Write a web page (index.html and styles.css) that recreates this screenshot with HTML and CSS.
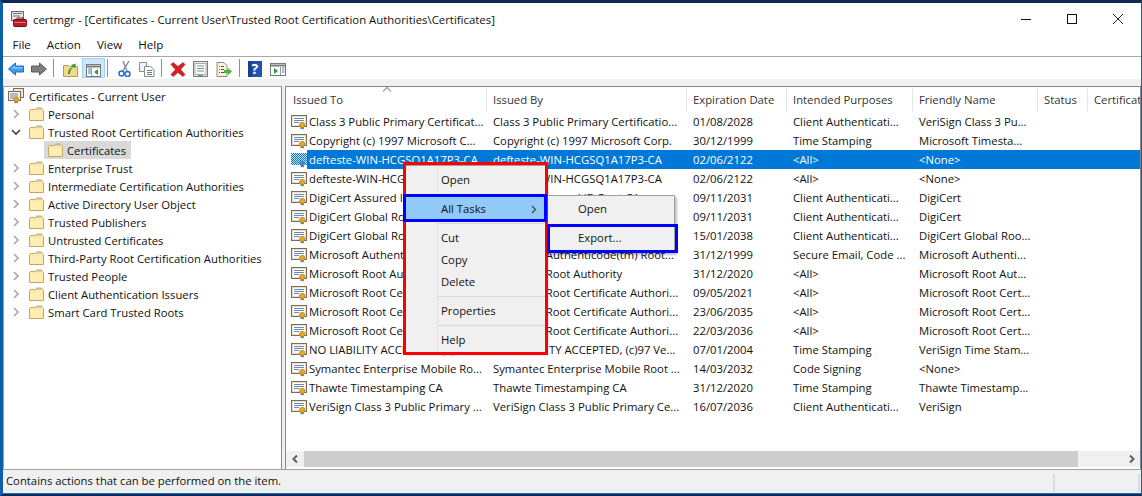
FILE: index.html
```html
<!DOCTYPE html>
<html lang="en">
<head>
    <meta charset="UTF-8">
    <title>certmgr</title>
    <link rel="stylesheet" href="styles.css">
</head>
<body>
    <svg class="defs" width="0" height="0">
        <defs>
            <symbol id="cert" viewBox="0 0 16 16">
                <rect x="0.5" y="1.5" width="15" height="11" fill="#e9e0cd" stroke="#7d6a52"/>
                <rect x="2" y="3" width="12" height="8" fill="#fff"/>
                <path d="M3 4.500h10M3 6.500h10M3 8.500h5" stroke="#6a8bb8"/>
                <path d="M10 12l-.5 3.500 1.700-1 1.700 1-.4-3.500z" fill="#2468c8"/>
                <circle cx="11.200" cy="11" r="2.700" fill="#e6a91f" stroke="#a8741a" stroke-width="0.600"/>
            </symbol>
            <symbol id="cert-root" viewBox="0 0 16 16">
                <rect x="5.500" y="0.500" width="10" height="9" fill="#efe7d6" stroke="#7d6a52"/>
                <rect x="0.500" y="3.500" width="12" height="9" fill="#f4efe3" stroke="#7d6a52"/>
                <path d="M2 6h8M2 8h8M2 10h4" stroke="#6a8bb8"/>
                <path d="M7 12l-.5 3.500 1.700-1 1.700 1-.4-3.500z" fill="#2468c8"/>
                <circle cx="8.200" cy="11.500" r="2.500" fill="#e6a91f" stroke="#a8741a" stroke-width="0.600"/>
            </symbol>
            <symbol id="cert-sel" viewBox="0 0 16 16">
                <pattern id="dither" width="2" height="2" patternUnits="userSpaceOnUse">
                    <rect width="2" height="2" fill="#0078d7"/>
                    <rect width="1" height="1" fill="#cfe0ee"/>
                    <rect x="1" y="1" width="1" height="1" fill="#cfe0ee"/>
                </pattern>
                <rect x="0" y="1" width="16" height="12" fill="url(#dither)"/>
                <path d="M10 12l-.5 3.500 1.700-1 1.700 1-.4-3.500z" fill="#1c62b8"/>
                <circle cx="11.200" cy="11" r="2.600" fill="#4f87b5"/>
            </symbol>
            <symbol id="folder" viewBox="0 0 16 16">
                <path d="M1.500 14.500V4.500l1-1h5l1-1.500h5l1 1.500 1 1v10z" fill="#fde9a3" stroke="#c8a860"/>
                <path d="M8.500 3h5" stroke="#9fb7c4"/>
                <path d="M2.500 13.500V6h11.500v7.500z" fill="#feeeb6"/>
            </symbol>
            <symbol id="open" viewBox="0 0 10 10">
                <path d="M3 1l4 4-4 4" fill="none" stroke="#a6a6a6" stroke-width="1.600"/>
            </symbol>
            <symbol id="shut" viewBox="0 0 10 10">
                <path d="M1 3l4 4 4-4" fill="none" stroke="#404040" stroke-width="1.600"/>
            </symbol>
        </defs>
    </svg>

    <div class="window">
        <div class="titlebar">
            <svg class="app-icon" width="16" height="16" viewBox="0 0 16 16">
                <rect x="0.500" y="0.500" width="12" height="9" fill="#e6e6e6" stroke="#666"/>
                <path d="M2 2.500h9M2 5h7" stroke="#777"/>
                <rect x="2.500" y="8.500" width="13" height="7" rx="1" fill="#b51d24" stroke="#7d1116"/>
                <path d="M6 8.500V7h6v1.500" fill="none" stroke="#7d1116"/>
                <path d="M3 11.500h12" stroke="#e6777a"/>
            </svg>
            <span class="title">certmgr - [Certificates - Current User\Trusted Root Certification Authorities\Certificates]</span>
            <div class="win-buttons">
                <svg width="10" height="10" viewBox="0 0 10 10"><path d="M0 5.500h10" stroke="#111"/></svg>
                <svg width="10" height="10" viewBox="0 0 10 10"><rect x="0.500" y="0.500" width="9" height="9" fill="none" stroke="#111"/></svg>
                <svg width="10" height="10" viewBox="0 0 10 10"><path d="M0 0l10 10M10 0L0 10" stroke="#111" stroke-width="0.900"/></svg>
            </div>
        </div>

        <div class="menubar">
            <span>File</span><span>Action</span><span>View</span><span>Help</span>
        </div>

        <div class="toolbar">
            <svg class="tool t-back" width="16" height="14" viewBox="0 0 16 14"><path d="M0.500 7l7-6v3h8v6h-8v3z" fill="#3d9be8" stroke="#1a6fc0"/><path d="M3.500 7l3-2.500V6h8" fill="none" stroke="#a8d8fb"/></svg>
            <svg class="tool t-fwd" width="16" height="14" viewBox="0 0 16 14"><path d="M15.500 7l-7-6v3h-8v6h8v3z" fill="#7d7d7d" stroke="#5c5c5c"/></svg>
            <i class="tool-sep"></i>
            <svg class="tool t-up" width="15" height="15" viewBox="0 0 15 15"><path d="M0.500 14.500V3.500h5l1 1h8v10z" fill="#f4d98c" stroke="#b89a52"/><path d="M5 12c0-4 2-6 5-7L8 3l5-1.500-1 5-1.500-1.500C8 7 7 9 7 12z" fill="#3e9b2f"/></svg>
            <span class="tool-on">
                <svg width="15" height="13" viewBox="0 0 15 13"><rect x="0.500" y="0.500" width="14" height="12" fill="#fff" stroke="#7a7a7a"/><path d="M1 2.500h13" stroke="#7a7a7a" stroke-width="2"/><path d="M5.500 4v8" stroke="#999"/><path d="M2 5h3M2 7h3M2 9h3" stroke="#5a7ea8"/><path d="M12 5v6L8 8z" fill="#2a9b3c"/></svg>
            </span>
            <i class="tool-sep"></i>
            <svg class="tool t-cut" width="13" height="16" viewBox="0 0 13 16"><path d="M11 0L5 10M5 0l4 10" stroke="#7e8a95" stroke-width="1.400" fill="none"/><circle cx="3.500" cy="12.500" r="2.500" fill="none" stroke="#1f6fd0" stroke-width="1.500"/><circle cx="9.500" cy="13" r="2.500" fill="none" stroke="#1f6fd0" stroke-width="1.500"/></svg>
            <svg class="tool t-copy" width="16" height="15" viewBox="0 0 16 15"><path d="M0.500 0.500h7v9h-7z" fill="#f4f4f4" stroke="#8a8a8a"/><path d="M5.500 4.500h6l3.500 3v7H5.500z" fill="#fff" stroke="#8a8a8a"/><path d="M8 8.500h5M8 10.500h5M8 12.500h5" stroke="#5a7ea8"/></svg>
            <i class="tool-sep"></i>
            <svg class="tool t-del" width="16" height="15" viewBox="0 0 16 15"><path d="M1 2.500l2-2 5 4 5-4 2 2-4.500 5 4.500 5-2 2-5-4-5 4-2-2 4.500-5z" fill="#d81f26" stroke="#a81318" stroke-width="0.600"/></svg>
            <svg class="tool t-prop" width="15" height="16" viewBox="0 0 15 16"><rect x="0.500" y="0.500" width="14" height="15" fill="#eeeeee" stroke="#7a7a7a"/><rect x="2" y="2.500" width="11" height="11" fill="#fff" stroke="#aaa"/><path d="M4 5h7M4 7.500h7M4 10h7" stroke="#888"/><path d="M5 14.500h5" stroke="#2fa8e0"/></svg>
            <svg class="tool t-exp" width="16" height="15" viewBox="0 0 16 15"><path d="M1 0.500h7l3 3v11H1z" fill="#f8f3dc" stroke="#8f8a78"/><path d="M3 4.500h1M5 4.500h3M3 7.500h1M5 7.500h3M3 10.500h1M5 10.500h3" stroke="#555"/><path d="M8 8h4V6l4 3.500-4 3.500v-2H8z" fill="#4bb33e"/></svg>
            <i class="tool-sep"></i>
            <svg class="tool t-help" width="14" height="16" viewBox="0 0 14 16"><rect width="14" height="16" fill="#2552ad"/><rect width="4" height="16" fill="#1c3f8c"/><text x="3.500" y="13" class="help-mark">?</text></svg>
            <svg class="tool t-pane" width="16" height="13" viewBox="0 0 16 13"><rect x="0.500" y="0.500" width="15" height="12" fill="#fff" stroke="#7a7a7a"/><path d="M1 2.500h14" stroke="#7a7a7a" stroke-width="2"/><path d="M10.500 4v8" stroke="#999"/><path d="M12 5h2.500M12 7h2.500M12 9h2.500" stroke="#5a7ea8"/><path d="M4 5v6l4-3z" fill="#2a9b3c"/></svg>
        </div>

        <div class="panes">
            <div class="tree">
                <div class="tree-row root"><svg class="t-icon"><use href="#cert-root"/></svg>Certificates - Current User</div>
                <div class="tree-row"><svg class="arrow"><use href="#open"/></svg><svg class="t-icon"><use href="#folder"/></svg>Personal</div>
                <div class="tree-row"><svg class="arrow"><use href="#shut"/></svg><svg class="t-icon"><use href="#folder"/></svg>Trusted Root Certification Authorities</div>
                <div class="tree-row child"><span class="tree-sel"><svg class="t-icon"><use href="#folder"/></svg>Certificates</span></div>
                <div class="tree-row"><svg class="arrow"><use href="#open"/></svg><svg class="t-icon"><use href="#folder"/></svg>Enterprise Trust</div>
                <div class="tree-row"><svg class="arrow"><use href="#open"/></svg><svg class="t-icon"><use href="#folder"/></svg>Intermediate Certification Authorities</div>
                <div class="tree-row"><svg class="arrow"><use href="#open"/></svg><svg class="t-icon"><use href="#folder"/></svg>Active Directory User Object</div>
                <div class="tree-row"><svg class="arrow"><use href="#open"/></svg><svg class="t-icon"><use href="#folder"/></svg>Trusted Publishers</div>
                <div class="tree-row"><svg class="arrow"><use href="#open"/></svg><svg class="t-icon"><use href="#folder"/></svg>Untrusted Certificates</div>
                <div class="tree-row"><svg class="arrow"><use href="#open"/></svg><svg class="t-icon"><use href="#folder"/></svg>Third-Party Root Certification Authorities</div>
                <div class="tree-row"><svg class="arrow"><use href="#open"/></svg><svg class="t-icon"><use href="#folder"/></svg>Trusted People</div>
                <div class="tree-row"><svg class="arrow"><use href="#open"/></svg><svg class="t-icon"><use href="#folder"/></svg>Client Authentication Issuers</div>
                <div class="tree-row"><svg class="arrow"><use href="#open"/></svg><svg class="t-icon"><use href="#folder"/></svg>Smart Card Trusted Roots</div>
            </div>

            <div class="list">
                <div class="list-body">
                    <div class="list-head">
                        <span class="col-1 sorted">Issued To</span>
                        <span class="col-2">Issued By</span>
                        <span class="col-3">Expiration Date</span>
                        <span class="col-4">Intended Purposes</span>
                        <span class="col-5">Friendly Name</span>
                        <span class="col-6">Status</span>
                        <span class="col-7">Certificate Template</span>
                    </div>
                    <div class="row"><svg class="c-icon"><use href="#cert"/></svg><span class="col-1">Class 3 Public Primary Certificat...</span><span class="col-2">Class 3 Public Primary Certificatio...</span><span class="col-3">01/08/2028</span><span class="col-4">Client Authenticati...</span><span class="col-5">VeriSign Class 3 Pu...</span></div>
                    <div class="row"><svg class="c-icon"><use href="#cert"/></svg><span class="col-1">Copyright (c) 1997 Microsoft C...</span><span class="col-2">Copyright (c) 1997 Microsoft Corp.</span><span class="col-3">30/12/1999</span><span class="col-4">Time Stamping</span><span class="col-5">Microsoft Timesta...</span></div>
                    <div class="row selected"><svg class="c-icon"><use href="#cert-sel"/></svg><span class="col-1">defteste-WIN-HCGSQ1A17P3-CA</span><span class="col-2">defteste-WIN-HCGSQ1A17P3-CA</span><span class="col-3">02/06/2122</span><span class="col-4">&lt;All&gt;</span><span class="col-5">&lt;None&gt;</span></div>
                    <div class="row"><svg class="c-icon"><use href="#cert"/></svg><span class="col-1">defteste-WIN-HCGSQ1A17P3-CA</span><span class="col-2">defteste-WIN-HCGSQ1A17P3-CA</span><span class="col-3">02/06/2122</span><span class="col-4">&lt;All&gt;</span><span class="col-5">&lt;None&gt;</span></div>
                    <div class="row"><svg class="c-icon"><use href="#cert"/></svg><span class="col-1">DigiCert Assured ID Root CA</span><span class="col-2">DigiCert Assured ID Root CA</span><span class="col-3">09/11/2031</span><span class="col-4">Client Authenticati...</span><span class="col-5">DigiCert</span></div>
                    <div class="row"><svg class="c-icon"><use href="#cert"/></svg><span class="col-1">DigiCert Global Root CA</span><span class="col-2">DigiCert Global Root CA</span><span class="col-3">09/11/2031</span><span class="col-4">Client Authenticati...</span><span class="col-5">DigiCert</span></div>
                    <div class="row"><svg class="c-icon"><use href="#cert"/></svg><span class="col-1">DigiCert Global Root G2</span><span class="col-2">DigiCert Global Root G2</span><span class="col-3">15/01/2038</span><span class="col-4">Client Authenticati...</span><span class="col-5">DigiCert Global Roo...</span></div>
                    <div class="row"><svg class="c-icon"><use href="#cert"/></svg><span class="col-1">Microsoft Authenticode(tm) Root...</span><span class="col-2">Microsoft Authenticode(tm) Root...</span><span class="col-3">31/12/1999</span><span class="col-4">Secure Email, Code ...</span><span class="col-5">Microsoft Authenti...</span></div>
                    <div class="row"><svg class="c-icon"><use href="#cert"/></svg><span class="col-1">Microsoft Root Authority</span><span class="col-2">Microsoft Root Authority</span><span class="col-3">31/12/2020</span><span class="col-4">&lt;All&gt;</span><span class="col-5">Microsoft Root Aut...</span></div>
                    <div class="row"><svg class="c-icon"><use href="#cert"/></svg><span class="col-1">Microsoft Root Certificate...</span><span class="col-2">Microsoft Root Certificate Authori...</span><span class="col-3">09/05/2021</span><span class="col-4">&lt;All&gt;</span><span class="col-5">Microsoft Root Cert...</span></div>
                    <div class="row"><svg class="c-icon"><use href="#cert"/></svg><span class="col-1">Microsoft Root Certificate...</span><span class="col-2">Microsoft Root Certificate Authori...</span><span class="col-3">23/06/2035</span><span class="col-4">&lt;All&gt;</span><span class="col-5">Microsoft Root Cert...</span></div>
                    <div class="row"><svg class="c-icon"><use href="#cert"/></svg><span class="col-1">Microsoft Root Certificate...</span><span class="col-2">Microsoft Root Certificate Authori...</span><span class="col-3">22/03/2036</span><span class="col-4">&lt;All&gt;</span><span class="col-5">Microsoft Root Cert...</span></div>
                    <div class="row"><svg class="c-icon"><use href="#cert"/></svg><span class="col-1">NO LIABILITY ACCEPTED, (c)9...</span><span class="col-2">NO LIABILITY ACCEPTED, (c)97 Ve...</span><span class="col-3">07/01/2004</span><span class="col-4">Time Stamping</span><span class="col-5">VeriSign Time Stam...</span></div>
                    <div class="row"><svg class="c-icon"><use href="#cert"/></svg><span class="col-1">Symantec Enterprise Mobile Ro...</span><span class="col-2">Symantec Enterprise Mobile Root ...</span><span class="col-3">14/03/2032</span><span class="col-4">Code Signing</span><span class="col-5">&lt;None&gt;</span></div>
                    <div class="row"><svg class="c-icon"><use href="#cert"/></svg><span class="col-1">Thawte Timestamping CA</span><span class="col-2">Thawte Timestamping CA</span><span class="col-3">31/12/2020</span><span class="col-4">Time Stamping</span><span class="col-5">Thawte Timestamp...</span></div>
                    <div class="row"><svg class="c-icon"><use href="#cert"/></svg><span class="col-1">VeriSign Class 3 Public Primary ...</span><span class="col-2">VeriSign Class 3 Public Primary Ce...</span><span class="col-3">16/07/2036</span><span class="col-4">Client Authenticati...</span><span class="col-5">VeriSign</span></div>
                </div>
                <div class="hscroll">
                    <svg width="18" height="16" viewBox="0 0 18 16"><path d="M11 4.500L7.500 8 11 11.500" fill="none" stroke="#606060" stroke-width="2"/></svg>
                    <div class="thumb"></div>
                    <svg width="17" height="16" viewBox="0 0 17 16"><path d="M7 4.500L10.500 8 7 11.500" fill="none" stroke="#606060" stroke-width="2"/></svg>
                </div>
            </div>
        </div>

        <div class="statusbar">
            <span class="status-main">Contains actions that can be performed on the item.</span>
            <span class="status-cell"></span>
            <span class="status-cell"></span>
        </div>
    </div>

    <div class="menu main-menu">
        <div class="item">Open</div>
        <div class="item hot">All Tasks<svg class="sub-arrow" width="6" height="9" viewBox="0 0 6 9"><path d="M1 1l3.500 3.500L1 8" fill="none" stroke="#444" stroke-width="1.200"/></svg></div>
        <div class="menu-sep"></div>
        <div class="item">Cut</div>
        <div class="item">Copy</div>
        <div class="item">Delete</div>
        <div class="menu-sep"></div>
        <div class="item">Properties</div>
        <div class="menu-sep"></div>
        <div class="item">Help</div>
    </div>
    <div class="menu sub-menu">
        <div class="item">Open</div>
        <div class="item">Export...</div>
    </div>
    <div class="mark mark-red"></div>
    <div class="mark mark-tasks"></div>
    <div class="mark mark-export"></div>
</body>
</html>
```

FILE: styles.css
```css
* {
    box-sizing: border-box;
}

html, body {
    margin: 0;
    height: 496px;
    overflow: hidden;
}

body {
    font-family: "Open Sans", "Noto Sans", sans-serif;
    font-size: 11.3px;
    color: #111;
    background: #0b2a55;
    position: relative;
}

.defs {
    position: absolute;
}

svg {
    display: block;
    flex: none;
}

.window {
    height: 496px;
    border-top: 3px solid #0b2a55;
    border-left: 3px solid #0f5fa8;
    border-right: 1px solid #0f5fa8;
    border-bottom: 2px solid #0b2a55;
    background: #f0f0f0;
    display: flex;
    flex-direction: column;
}

.titlebar {
    height: 32px;
    background: #fff;
    display: flex;
    align-items: center;
    padding-left: 8px;
    flex: none;
}

.title {
    margin-left: 6px;
    font-size: 11.4px;
}

.win-buttons {
    margin-left: auto;
    display: flex;
    gap: 36px;
    padding-right: 18px;
}

.menubar {
    height: 22px;
    background: #fff;
    display: flex;
    gap: 16px;
    padding: 2px 0 0 9.5px;
    font-size: 11.6px;
    border-bottom: 1px solid #a9a9a9;
    flex: none;
}

.toolbar {
    height: 22px;
    background: #fff;
    display: flex;
    align-items: center;
    padding-left: 5px;
    flex: none;
}

.tool {
    margin-top: 2px;
}

.tool-sep {
    width: 1px;
    height: 18px;
    background: #8f8f8f;
}

.t-fwd { margin-left: 7px; }
.t-fwd + .tool-sep { margin-left: 6px; }
.t-up { margin-left: 9px; }
.tool-on {
    width: 23px;
    height: 20px;
    margin-left: 4px;
    margin-right: 2px;
    background: #cce8ff;
    border: 1px solid #99d1ff;
    display: flex;
    align-items: center;
    justify-content: center;
    padding-top: 4px;
}
.t-cut { margin-left: 10px; }
.t-copy { margin-left: 8px; }
.t-copy + .tool-sep { margin-left: 6px; }
.t-del { margin-left: 8px; }
.t-prop { margin-left: 7px; }
.t-exp { margin-left: 8px; }
.t-exp + .tool-sep { margin-left: 7px; }
.t-help { margin-left: 8px; }
.t-pane { margin-left: 8px; }

.help-mark {
    font-size: 14px;
    font-weight: 700;
    fill: #fff;
}

.panes {
    flex: 1;
    min-height: 0;
    display: flex;
    gap: 3px;
    padding-top: 7px;
    background: #f0f0f0;
    border-bottom: 1px solid #a0a0a0;
}

.tree {
    width: 279px;
    background: #fff;
    border: 1px solid #a0a0a0;
    border-right-color: #828790;
    border-bottom: 0;
    flex: none;
}

.tree-row {
    height: 18px;
    display: flex;
    align-items: center;
    padding-left: 7px;
    white-space: nowrap;
}

.tree-row.root {
    padding-left: 4px;
}

.arrow {
    width: 10px;
    height: 10px;
    margin-right: 7px;
}

.t-icon {
    width: 16px;
    height: 16px;
    margin-right: 4px;
}

.root .t-icon {
    margin-right: 5px;
}

.child {
    padding-left: 40px;
}

.tree-sel {
    height: 18px;
    display: flex;
    align-items: center;
    background: #d9d9d9;
    padding: 0 5px 0 3px;
}

.list {
    flex: 1;
    min-width: 0;
    background: #fff;
    border: 1px solid #828790;
    border-bottom: 0;
    display: flex;
    flex-direction: column;
    overflow: hidden;
}

.list-body {
    flex: 1;
    min-height: 0;
    overflow: hidden;
}

.list-head {
    height: 25px;
    display: flex;
    align-items: center;
    padding-left: 1px;
    white-space: nowrap;
    color: #333;
    position: relative;
}

.list-head span {
    height: 25px;
    line-height: 26px;
    padding-left: 6px;
    border-right: 1px solid #e5e5e5;
    overflow: hidden;
    flex: none;
}

.list-head .col-7 {
    border-right: 0;
}

.sorted::before {
    content: "";
    position: absolute;
    left: 98px;
    top: 1px;
    width: 5px;
    height: 5px;
    border-left: 1px solid #8a8a8a;
    border-top: 1px solid #8a8a8a;
    transform: rotate(45deg);
}

.col-1 { width: 200px; }
.col-2 { width: 200px; }
.col-3 { width: 100px; }
.col-4 { width: 126px; }
.col-5 { width: 125px; }
.col-6 { width: 50px; }
.col-7 { width: 100px; }

.row {
    height: 19px;
    display: flex;
    align-items: center;
    white-space: nowrap;
    padding-left: 5px;
    color: #111;
}

.row span {
    padding-left: 6px;
    overflow: hidden;
    flex: none;
}

.row .col-1 {
    width: 180px;
    padding-left: 2px;
}

.c-icon {
    width: 16px;
    height: 16px;
}

.selected {
    color: #fff;
}

.selected span {
    background: #0078d7;
    height: 19px;
    line-height: 19px;
}

.selected .col-5 {
    flex: 1;
}

.hscroll {
    height: 16px;
    margin-bottom: 2px;
    background: #f0f0f0;
    display: flex;
    flex: none;
}

.thumb {
    flex: none;
    width: 774px;
    background: #cdcdcd;
    margin-right: auto;
}

.statusbar {
    height: 24px;
    display: flex;
    align-items: stretch;
    padding: 1px 0 1px 3px;
    border-bottom: 1px solid #1573c4;
    flex: none;
    white-space: nowrap;
}

.status-main {
    flex: 1;
    line-height: 19px;
}

.status-cell {
    width: 85px;
    margin: 3px 0 0;
    border-left: 2px solid #dcdcdc;
}

.status-cell:last-child {
    width: 3px;
}

.menu {
    position: absolute;
    background: #f0f0f0;
    border: 1px solid #a0a0a0;
    box-shadow: 2px 2px 2px rgba(0, 0, 0, 0.25);
}

.main-menu {
    left: 405px;
    top: 165px;
    width: 141px;
    height: 188px;
    padding-top: 1px;
}

.main-menu::before {
    content: "";
    position: absolute;
    left: 31px;
    top: 0;
    bottom: 0;
    width: 1px;
    background: #e3e3e3;
}

.sub-menu {
    left: 546px;
    top: 195px;
    width: 129px;
    height: 58px;
}

.item {
    height: 22px;
    line-height: 22px;
    padding-left: 35px;
    position: relative;
}

.main-menu .item:first-child {
    height: 26px;
    line-height: 26px;
}

.sub-menu .item {
    padding-left: 31px;
    height: 29px;
    line-height: 26px;
}

.hot {
    background: #91c9f7;
    height: 26px;
    line-height: 26px;
    margin-top: 3px;
}

.hot + .menu-sep {
    margin-top: 1px;
}

.sub-arrow {
    position: absolute;
    right: 8px;
    top: 9px;
}

.menu-sep {
    height: 1px;
    margin: 3px 0 3px 32px;
    background: #d7d7d7;
}

.mark {
    position: absolute;
    pointer-events: none;
}

.mark-red {
    left: 403px;
    top: 162px;
    width: 145px;
    height: 193px;
    border: 3px solid #ff0000;
}

.mark-tasks {
    left: 403px;
    top: 194px;
    width: 144px;
    height: 28px;
    border: 3px solid #0000ff;
}

.mark-export {
    left: 547px;
    top: 224px;
    width: 131px;
    height: 29px;
    border: 3px solid #0000ff;
}
```
